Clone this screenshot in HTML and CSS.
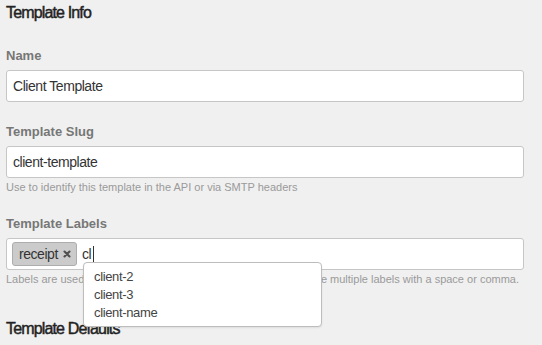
FILE: index.html
```html
<!DOCTYPE html>
<html>
<head>
<meta charset="utf-8">
<link rel="stylesheet" href="styles.css">
</head>
<body>
<div class="page">
  <h2 class="section-title first">Template Info</h2>

  <div class="field first-field">
    <label class="field-label">Name</label>
    <div class="text-input">Client Template</div>
  </div>

  <div class="field">
    <label class="field-label">Template Slug</label>
    <div class="text-input">client-template</div>
    <p class="help">Use to identify this template in the API or via SMTP headers</p>
  </div>

  <div class="field">
    <label class="field-label">Template Labels</label>
    <div class="tag-input">
      <span class="tag">receipt<svg class="tag-x" width="8" height="8" viewBox="0 0 8 8"><path d="M1.5 1.5L6.5 6.5M6.5 1.5L1.5 6.5" stroke="#505050" stroke-width="2.1" stroke-linecap="round"/></svg></span>
      <span class="typed">cl</span><span class="caret"></span>
      <ul class="suggest">
        <li>client-2</li>
        <li>client-3</li>
        <li>client-name</li>
      </ul>
    </div>
    <p class="help">Labels are used to organize and filter all your templates. Separate multiple labels with a space or comma.</p>
  </div>

  <h2 class="section-title second">Template Defaults</h2>
</div>
</body>
</html>
```

FILE: styles.css
```css
html, body {
  margin: 0;
  padding: 0;
  background: #f0f0f0;
}

body {
  font-family: "Liberation Sans", Arial, sans-serif;
  color: #333;
  overflow: hidden;
}

.page {
  padding: 0 18px 0 6px;
}

.section-title {
  margin: 0;
  font-size: 16px;
  line-height: 20px;
  font-weight: normal;
  letter-spacing: -0.85px;
  color: #222;
  -webkit-text-stroke: 0.45px #222;
}

.section-title.first {
  padding-top: 3px;
}

.section-title.second {
  margin-top: 33px;
}

.field {
  margin-top: 22px;
  position: relative;
}

.field.first-field {
  margin-top: 25px;
}

.field-label {
  display: block;
  font-size: 13px;
  line-height: 16px;
  font-weight: bold;
  color: #777;
  margin-bottom: 6px;
}

.text-input {
  box-sizing: border-box;
  height: 32px;
  background: #fff;
  border: 1px solid #c6c6c6;
  border-radius: 3px;
  padding: 0 6px;
  font-size: 14px;
  letter-spacing: -0.45px;
  line-height: 30px;
  color: #333;
}

.help {
  margin: 2px 0 0;
  font-size: 11px;
  line-height: 14px;
  color: #9a9a9a;
  white-space: nowrap;
}

.tag-input {
  position: relative;
  box-sizing: border-box;
  height: 32px;
  background: #fff;
  border: 1px solid #c6c6c6;
  border-radius: 3px;
  padding: 3px 5px;
  display: flex;
  align-items: center;
  font-size: 14px;
  letter-spacing: -0.45px;
  color: #333;
}

.tag {
  box-sizing: border-box;
  height: 24px;
  display: inline-flex;
  align-items: center;
  gap: 5px;
  padding: 0 5px 0 6px;
  background: #cbcbcb;
  border: 1px solid #adadad;
  border-radius: 3px;
  color: #333;
}

.tag-x {
  display: block;
}

.typed {
  margin-left: 5px;
}

.caret {
  display: inline-block;
  width: 1px;
  height: 16px;
  background: #333;
  margin-left: 2px;
}

.suggest {
  position: absolute;
  left: 76px;
  top: 23px;
  width: 239px;
  box-sizing: border-box;
  margin: 0;
  padding: 5px 0 4px;
  list-style: none;
  background: #fff;
  border: 1px solid #bdbdbd;
  border-radius: 4px;
  box-shadow: 0 1px 2px rgba(0, 0, 0, 0.08);
  z-index: 2;
}

.suggest li {
  padding: 0 10px;
  font-size: 13px;
  line-height: 18px;
  letter-spacing: -0.35px;
  color: #444;
}
```
